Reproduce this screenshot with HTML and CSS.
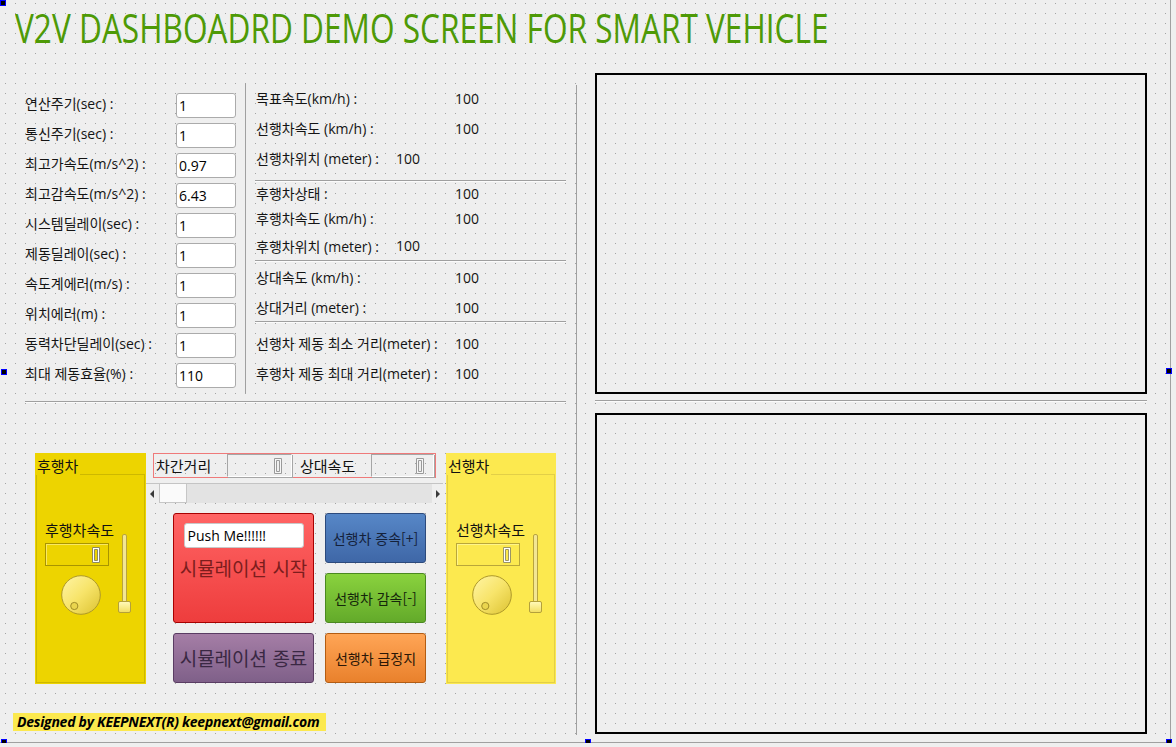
FILE: index.html
```html
<!DOCTYPE html>
<html lang="ko">
<head>
<meta charset="utf-8">
<title>V2V Dashboard</title>
<link rel="stylesheet" href="styles.css">
</head>
<body>
<div class="form">
  <div class="title"><span class="title-text">V2V DASHBOADRD DEMO SCREEN FOR SMART VEHICLE</span></div>
  <div class="main">
    <div class="leftcol">
      <div class="top">
        <div class="params">
          <div class="prow"><span class="plabel">연산주기(sec) :</span><span class="pinput">1</span></div>
          <div class="prow"><span class="plabel">통신주기(sec) :</span><span class="pinput">1</span></div>
          <div class="prow"><span class="plabel">최고가속도(m/s^2) :</span><span class="pinput">0.97</span></div>
          <div class="prow"><span class="plabel">최고감속도(m/s^2) :</span><span class="pinput">6.43</span></div>
          <div class="prow"><span class="plabel">시스템딜레이(sec) :</span><span class="pinput">1</span></div>
          <div class="prow"><span class="plabel">제동딜레이(sec) :</span><span class="pinput">1</span></div>
          <div class="prow"><span class="plabel">속도계에러(m/s) :</span><span class="pinput">1</span></div>
          <div class="prow"><span class="plabel">위치에러(m) :</span><span class="pinput">1</span></div>
          <div class="prow"><span class="plabel">동력차단딜레이(sec) :</span><span class="pinput">1</span></div>
          <div class="prow"><span class="plabel">최대 제동효율(%) :</span><span class="pinput">110</span></div>
        </div>
        <div class="vsep"></div>
        <div class="info">
          <div class="irow h30"><span class="ilabel">목표속도(km/h) :</span><span>100</span></div>
          <div class="irow h30"><span class="ilabel">선행차속도 (km/h) :</span><span>100</span></div>
          <div class="irow h30"><span class="ilabel short">선행차위치 (meter) :</span><span>100</span></div>
          <div class="isep s1"></div>
          <div class="irow h24"><span class="ilabel">후행차상태 :</span><span>100</span></div>
          <div class="irow h26"><span class="ilabel">후행차속도 (km/h) :</span><span>100</span></div>
          <div class="irow h29"><span class="ilabel short">후행차위치 (meter) :</span><span>100</span></div>
          <div class="isep"></div>
          <div class="irow h32"><span class="ilabel">상대속도 (km/h) :</span><span>100</span></div>
          <div class="irow h28"><span class="ilabel">상대거리 (meter) :</span><span>100</span></div>
          <div class="isep"></div>
          <div class="irow h30 first4"><span class="ilabel">선행차 제동 최소 거리(meter) :</span><span>100</span></div>
          <div class="irow h30"><span class="ilabel">후행차 제동 최대 거리(meter) :</span><span>100</span></div>
        </div>
      </div>
      <div class="hsep"></div>
      <div class="panel">
        <div class="group rear">
          <div class="ghead"><span class="gtitle">후행차</span><span class="gline"></span></div>
          <div class="gbody">
            <div class="gcol">
              <span class="glabel">후행차속도</span>
              <div class="lcd glcd"><svg class="digit" width="10" height="18" viewBox="0 0 10 18"><path d="M1.5 1.5H8.5V16.5H1.5Z M3.5 3.5V14.5H6.5V3.5Z" fill="#ffffff" stroke="#8f8a60" fill-rule="evenodd"/></svg></div>
              <svg class="dial" width="40" height="40" viewBox="0 0 40 40">
                <defs><linearGradient id="dg" x1="0" y1="0" x2="1" y2="1"><stop offset="0" stop-color="#fff5a6"/><stop offset="0.5" stop-color="#f7e46a"/><stop offset="1" stop-color="#dcc230"/></linearGradient></defs>
                <circle cx="20" cy="20" r="19.3" fill="url(#dg)" stroke="#ad982a" stroke-width="1"/>
                <circle cx="13.3" cy="31" r="3.6" fill="#ead54e" stroke="#a08c28" stroke-width="1"/>
              </svg>
            </div>
            <div class="slider"><span class="groove"></span><span class="knob"></span></div>
          </div>
        </div>
        <div class="mid">
          <div class="pair">
            <span class="plab">차간거리</span>
            <div class="lcd mlcd w65"><svg class="digit" width="10" height="18" viewBox="0 0 10 18"><path d="M1.5 1.5H8.5V16.5H1.5Z M3.5 3.5V14.5H6.5V3.5Z" fill="#f6f6f6" stroke="#9a9a9a" fill-rule="evenodd"/></svg></div>
            <span class="plab second">상대속도</span>
            <div class="lcd mlcd w63"><svg class="digit" width="10" height="18" viewBox="0 0 10 18"><path d="M1.5 1.5H8.5V16.5H1.5Z M3.5 3.5V14.5H6.5V3.5Z" fill="#f6f6f6" stroke="#9a9a9a" fill-rule="evenodd"/></svg></div>
          </div>
          <div class="scroll">
            <span class="sbtn"><span class="tri left"></span></span>
            <span class="shandle"></span>
            <span class="strack"></span>
            <span class="sbtn"><span class="tri right"></span></span>
          </div>
          <div class="btns">
            <div class="btn b-start">
              <span class="pushme">Push Me!!!!!!</span>
              <span class="bigtxt">시뮬레이션 시작</span>
            </div>
            <div class="btn b-blue">선행차 증속[+]</div>
            <div class="btn b-green">선행차 감속[-]</div>
            <div class="btn b-purple"><span class="bigtxt">시뮬레이션 종료</span></div>
            <div class="btn b-orange">선행차 급정지</div>
          </div>
        </div>
        <div class="group front">
          <div class="ghead"><span class="gtitle">선행차</span><span class="gline"></span></div>
          <div class="gbody">
            <div class="gcol">
              <span class="glabel">선행차속도</span>
              <div class="lcd glcd"><svg class="digit" width="10" height="18" viewBox="0 0 10 18"><path d="M1.5 1.5H8.5V16.5H1.5Z M3.5 3.5V14.5H6.5V3.5Z" fill="#ffffff" stroke="#9a9466" fill-rule="evenodd"/></svg></div>
              <svg class="dial" width="40" height="40" viewBox="0 0 40 40">
                <circle cx="20" cy="20" r="19.3" fill="url(#dg)" stroke="#ad982a" stroke-width="1"/>
                <circle cx="13.3" cy="31" r="3.6" fill="#ead54e" stroke="#a08c28" stroke-width="1"/>
              </svg>
            </div>
            <div class="slider"><span class="groove"></span><span class="knob"></span></div>
          </div>
        </div>
      </div>
      <div class="footer">Designed by KEEPNEXT(R) keepnext@gmail.com</div>
    </div>
    <div class="vline"></div>
    <div class="rightcol">
      <div class="rbox"></div>
      <div class="rsep"></div>
      <div class="rbox second"></div>
    </div>
  </div>
  <span class="handle hd-tl"></span>
  <span class="handle hd-ml"></span>
  <span class="handle hd-bl"></span>
  <span class="handle hd-bm"></span>
  <span class="handle hd-br"></span>
  <span class="handle hd-mr"></span>
</div>
</body>
</html>
```

FILE: styles.css
```css
html, body {
  margin: 0;
  padding: 0;
  background: #efefef;
  overflow: hidden;
}

.form {
  position: relative;
  width: 1171px;
  height: 743px;
  box-sizing: border-box;
  border-right: 1px solid #a0a0a0;
  border-bottom: 1px solid #a0a0a0;
  background-color: #efefef;
  background-image: conic-gradient(at 1px 1px, transparent 75%, #a3a3a3 0);
  background-size: 10px 10px;
  background-position: 5px 3px;
  font-family: "Open Sans", "Noto Sans CJK KR", sans-serif;
  font-size: 14px;
  color: #141414;
}

.title {
  height: 73px;
  box-sizing: border-box;
  padding: 4px 0 0 15px;
  font-family: "Open Sans", sans-serif;
  font-size: 40px;
  line-height: 48px;
  color: #4e9a06;
  white-space: nowrap;
}
.title-text {
  display: inline-block;
  transform: scaleX(0.79);
  transform-origin: 0 50%;
}

.main {
  display: flex;
  align-items: flex-start;
}

.leftcol {
  width: 576px;
  flex: none;
  padding-top: 10px;
}

.top {
  display: flex;
  height: 310px;
}

.params {
  margin-left: 25px;
  width: 211px;
  padding-top: 7px;
}
.prow {
  display: flex;
  align-items: center;
  height: 30px;
}
.plabel {
  width: 151px;
  flex: none;
  white-space: nowrap;
  line-height: 20px;
  padding-bottom: 2px;
}
.pinput {
  width: 60px;
  height: 25px;
  box-sizing: border-box;
  border: 1px solid #ababab;
  border-radius: 3px;
  background: #ffffff;
  padding-left: 2px;
  line-height: 24px;
  font-size: 14px;
  color: #000;
}

.vsep {
  margin-left: 9px;
  width: 1px;
  height: 310px;
  background: #a0a0a0;
}

.info {
  margin-left: 9px;
  width: 311px;
}
.irow {
  display: flex;
  align-items: center;
  padding-left: 1px;
  white-space: nowrap;
}
.ilabel {
  width: 199px;
  flex: none;
}
.ilabel.short {
  width: 140px;
}
.h24 { height: 24px; }
.h26 { height: 26px; }
.h28 { height: 28px; }
.h29 { height: 29px; }
.h30 { height: 30px; }
.h32 { height: 32px; }
.first4 { margin-top: 6px; }

.isep {
  height: 1px;
  background: #a0a0a0;
  box-shadow: 0 1px 0 #fbfbfb;
}
.isep.s1 {
  margin-top: 7px;
}

.hsep {
  margin: 8px 0 0 25px;
  width: 541px;
  height: 1px;
  background: #a0a0a0;
  box-shadow: 0 1px 0 #fbfbfb;
}

.panel {
  display: flex;
  margin: 51px 0 0 35px;
  height: 231px;
}

.group {
  width: 111px;
  flex: none;
  display: flex;
  flex-direction: column;
  font-family: "Noto Sans CJK KR", sans-serif;
}
.group.rear {
  background: #edd400;
  --frame: #cdb800;
  --lcdline: #a89400;
  --lcdlight: #f9e862;
}
.group.front {
  width: 110px;
  background: #fce94f;
  --frame: #e2cf48;
  --lcdline: #b9a63a;
  --lcdlight: #fff58a;
}
.ghead {
  display: flex;
  height: 22px;
}
.gtitle {
  width: 43px;
  padding-left: 2px;
  font-size: 15px;
  line-height: 26px;
  color: #111;
  white-space: nowrap;
}
.gline {
  flex: 1;
  margin-right: 1px;
  border-bottom: 1px solid var(--frame);
}
.gbody {
  flex: 1;
  margin: 0 1px 1px 1px;
  border: 1px solid var(--frame);
  border-top: none;
  display: flex;
  padding-left: 8px;
}
.gcol {
  width: 73px;
  flex: none;
  padding-top: 46px;
  display: flex;
  flex-direction: column;
  align-items: flex-start;
}
.glabel {
  font-size: 15px;
  line-height: 18px;
  color: #111;
  white-space: nowrap;
}
.lcd {
  box-sizing: border-box;
  display: flex;
  align-items: center;
  justify-content: flex-end;
}
.glcd {
  margin-top: 4px;
  width: 64px;
  height: 23px;
  border: 1px solid var(--lcdline);
  box-shadow: inset 1px 1px 0 var(--lcdlight);
  padding-right: 7px;
}
.digit {
  display: block;
}
.dial {
  display: block;
  margin-top: 9px;
  margin-left: 16px;
}

.slider {
  position: relative;
  margin-top: 59px;
  width: 13px;
  height: 79px;
}
.groove {
  position: absolute;
  top: 0;
  bottom: 8px;
  left: 4px;
  width: 5px;
  box-sizing: border-box;
  border: 1px solid #b8a440;
  border-radius: 2px;
  background: #f3e693;
}
.knob {
  position: absolute;
  left: 0;
  bottom: 0;
  width: 13px;
  height: 12px;
  box-sizing: border-box;
  border: 1px solid #b3a03c;
  border-radius: 2px;
  background: linear-gradient(#fff9b8, #f3df64);
}

.mid {
  width: 300px;
  flex: none;
  font-family: "Noto Sans CJK KR", sans-serif;
}
.pair {
  margin-left: 7px;
  width: 283px;
  height: 25px;
  box-sizing: border-box;
  border: 1px solid #ef7a7a;
  display: flex;
  align-items: center;
}
.plab {
  width: 71px;
  flex: none;
  padding-left: 2px;
  font-size: 15px;
  line-height: 23px;
  color: #111;
  white-space: nowrap;
}
.plab.second {
  width: 71px;
  padding-left: 0;
  margin-left: 8px;
}
.mlcd {
  height: 23px;
  border: 1px solid;
  border-color: #a6a6a6 #ffffff #ffffff #a6a6a6;
  box-shadow: 1px 1px 0 #a6a6a6;
  padding-right: 8px;
}
.w65 { width: 65px; }
.w63 { width: 63px; }

.scroll {
  margin-top: 5px;
  width: 297px;
  height: 20px;
  box-sizing: border-box;
  border-top: 1px solid #c4c4c4;
  display: flex;
}
.sbtn {
  width: 11px;
  flex: none;
  display: flex;
  align-items: center;
  justify-content: center;
  background: #efefef;
}
.tri {
  width: 0;
  height: 0;
  border-top: 4px solid transparent;
  border-bottom: 4px solid transparent;
}
.tri.left { border-right: 4px solid #3a3a3a; }
.tri.right { border-left: 4px solid #3a3a3a; }
.shandle {
  width: 28px;
  flex: none;
  margin-left: 2px;
  box-sizing: border-box;
  border: 1px solid #c6c6c6;
  border-top: none;
  background: #fafafa;
}
.strack {
  flex: 1;
  background: #e3e3e3;
}

.btns {
  margin: 10px 0 0 27px;
  display: grid;
  grid-template-columns: 141px 101px;
  grid-template-rows: 50px 50px 50px;
  column-gap: 11px;
  row-gap: 10px;
}
.btn {
  box-sizing: border-box;
  border: 1px solid;
  border-radius: 3px;
  display: flex;
  align-items: center;
  justify-content: center;
  font-size: 14px;
  white-space: nowrap;
}
.b-start {
  grid-row: 1 / span 2;
  grid-column: 1;
  flex-direction: column;
  justify-content: flex-start;
  padding-top: 9px;
  background: linear-gradient(#ff6464, #ee3d3d);
  border-color: #a80000;
  color: #7c1d1d;
}
.pushme {
  width: 120px;
  height: 25px;
  box-sizing: border-box;
  background: #ffffff;
  border: 1px solid #c8c8c8;
  border-radius: 3px;
  padding-left: 3px;
  font-family: "Open Sans", sans-serif;
  font-size: 14px;
  line-height: 23px;
  color: #000;
}
.bigtxt {
  font-size: 19px;
  line-height: 28px;
}
.b-start .bigtxt {
  margin-top: 6px;
}
.b-purple {
  grid-row: 3;
  grid-column: 1;
  background: linear-gradient(#a57ea6, #7f6089);
  border-color: #5a3c63;
  color: #3a2843;
}
.b-blue {
  grid-row: 1;
  grid-column: 2;
  background: linear-gradient(#5787c7, #3f67a7);
  border-color: #2c4a7c;
  color: #14213a;
}
.b-green {
  grid-row: 2;
  grid-column: 2;
  background: linear-gradient(#8ad23e, #63aa2a);
  border-color: #4a8820;
  color: #15260b;
}
.b-orange {
  grid-row: 3;
  grid-column: 2;
  background: linear-gradient(#ffa556, #e9812c);
  border-color: #b35c12;
  color: #2a1707;
}

.footer {
  margin: 29px 0 0 13px;
  width: 313px;
  height: 18px;
  box-sizing: border-box;
  padding-left: 4px;
  background: #fce94f;
  font-family: "Open Sans", sans-serif;
  font-weight: 700;
  font-style: italic;
  font-size: 14px;
  line-height: 18px;
  letter-spacing: -0.25px;
  color: #000;
  white-space: nowrap;
}

.vline {
  width: 1px;
  flex: none;
  height: 650px;
  margin-top: 12px;
  background: #a0a0a0;
}

.rightcol {
  margin-left: 18px;
}
.rbox {
  width: 552px;
  height: 321px;
  box-sizing: border-box;
  border: 2px solid #000;
}
.rbox.second {
  margin-top: 12px;
}
.rsep {
  margin-top: 6px;
  width: 552px;
  height: 1px;
  background: #a0a0a0;
  box-shadow: 0 1px 0 #fbfbfb;
}

.handle {
  position: absolute;
  width: 4px;
  height: 4px;
  background: #000;
  border: 1px solid #0000ff;
}
.hd-tl { left: 0; top: 0; }
.hd-ml { left: 1px; top: 369px; }
.hd-bl { left: 1px; top: 739px; }
.hd-bm { left: 585px; top: 739px; }
.hd-br { left: 1166px; top: 739px; }
.hd-mr { left: 1166px; top: 368px; }
```
